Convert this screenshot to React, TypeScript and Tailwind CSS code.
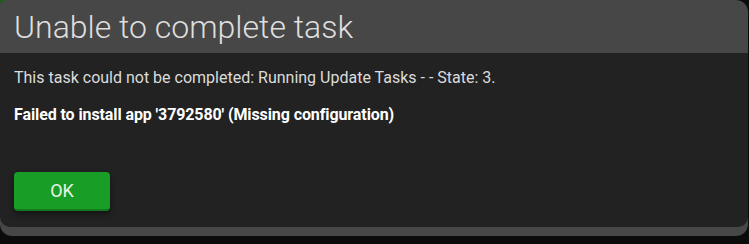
import React from 'react';

const App: React.FC = () => {
  return (
    <div className="min-h-screen w-full bg-[#0b0b0b] font-['Roboto',sans-serif]">
      <div className="relative w-[748px] rounded-tr-[12px] rounded-b-[12px] bg-[#474747] pb-[9px]">
        <div className="absolute left-0 top-0 h-[3px] w-[3px] bg-[#1e5a1e]" />
        <div className="flex h-[53px] items-center px-[14px]">
          <h1 className="text-[32px] font-light leading-none text-[#dedede] pt-[1px]">
            Unable to complete task
          </h1>
        </div>
        <div className="flex h-[174px] flex-col rounded-b-[10px] bg-[#222222] px-[14px] pt-[15px]">
          <p className="text-[16px] leading-[20px] text-[#dcdcdc]">
            This task could not be completed: Running Update Tasks - - State: 3.
          </p>
          <p className="mt-[17px] text-[16px] font-bold leading-[20px] tracking-[-0.1px] text-white">
            Failed to install app '3792580' (Missing configuration)
          </p>
          <button className="mt-[47px] h-[39px] w-[96px] rounded-[4px] border-b-2 border-[#127a1d] bg-[#189d27] text-[18px] text-[#e8f5e8] shadow-[0_3px_6px_rgba(0,0,0,0.45)]">
            OK
          </button>
        </div>
      </div>
    </div>
  );
};

export default App;
